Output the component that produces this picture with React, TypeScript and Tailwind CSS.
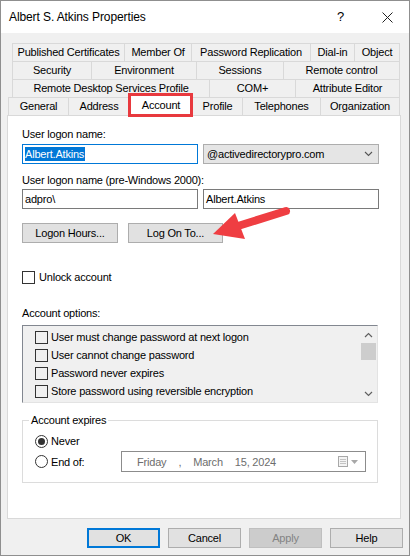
import React from "react";

type TabDef = { label: string; w: string };

const row1: TabDef[] = [
  { label: "Published Certificates", w: "w-[113px]" },
  { label: "Member Of", w: "w-[67px]" },
  { label: "Password Replication", w: "w-[119px]" },
  { label: "Dial-in", w: "w-[44px]" },
  { label: "Object", w: "w-[45px]" },
];

const row2: TabDef[] = [
  { label: "Security", w: "w-[80px]" },
  { label: "Environment", w: "w-[105px]" },
  { label: "Sessions", w: "w-[87px]" },
  { label: "Remote control", w: "w-[116px]" },
];

const row3: TabDef[] = [
  { label: "Remote Desktop Services Profile", w: "w-[198px]" },
  { label: "COM+", w: "w-[86px]" },
  { label: "Attribute Editor", w: "w-[104px]" },
];

const options = [
  "User must change password at next logon",
  "User cannot change password",
  "Password never expires",
  "Store password using reversible encryption",
];

function TabRow({ tabs, className }: { tabs: TabDef[]; className: string }) {
  return (
    <div className={`flex h-[18px] ${className}`}>
      {tabs.map((t, i) => (
        <div
          key={t.label}
          className={`${t.w} h-full flex items-center justify-center border-t border-r border-[#d9d9d9] ${
            i === 0 ? "border-l" : ""
          }`}
        >
          {t.label}
        </div>
      ))}
    </div>
  );
}

function Checkbox() {
  return <span className="w-[13px] h-[13px] border border-[#333333] shrink-0" />;
}

function Radio({ checked }: { checked?: boolean }) {
  return (
    <span className="w-[13px] h-[13px] rounded-full border border-[#333333] flex items-center justify-center shrink-0">
      {checked && <span className="w-[7px] h-[7px] rounded-full bg-[#333333]" />}
    </span>
  );
}

function Chevron({ up }: { up?: boolean }) {
  return (
    <svg width="9" height="6" viewBox="0 0 9 6">
      <polyline
        points={up ? "1,5 4.5,1.5 8,5" : "1,1 4.5,4.5 8,1"}
        fill="none"
        stroke="#606060"
        strokeWidth="1.2"
      />
    </svg>
  );
}

function Button({ label, className = "" }: { label: string; className?: string }) {
  return (
    <div
      className={`h-[20px] flex items-center justify-center border border-[#adadad] bg-[#e1e1e1] ${className}`}
    >
      {label}
    </div>
  );
}

export default function App() {
  return (
    <div className="relative w-[410px] h-[556px] border border-[#8f8f8f] bg-[#f0f0f0] flex flex-col text-black font-['Liberation_Sans',Arial,sans-serif] text-[11px] tracking-[-0.2px] overflow-hidden">
      {/* title bar */}
      <div className="h-[32px] bg-white flex items-center pl-[8px] shrink-0">
        <span className="text-[12px] tracking-[-0.1px]">Albert S. Atkins Properties</span>
        <span className="ml-auto text-[13px] mr-[38px]">?</span>
        <svg width="11" height="11" viewBox="0 0 11 11" className="mr-[16px]">
          <path d="M0.5 0.5 L10.5 10.5 M10.5 0.5 L0.5 10.5" stroke="#222" strokeWidth="1" />
        </svg>
      </div>

      {/* tabs */}
      <div className="mt-[10px] flex flex-col">
        <TabRow tabs={row1} className="ml-[11px]" />
        <TabRow tabs={row2} className="ml-[11px]" />
        <TabRow tabs={row3} className="ml-[11px]" />
        <div className="flex h-[18px] items-end ml-[7px]">
          <div className="w-[61px] h-full flex items-center justify-center border-t border-l border-r border-[#d9d9d9]">
            General
          </div>
          <div className="w-[61px] h-full flex items-center justify-center border-t border-r border-[#d9d9d9]">
            Address
          </div>
          <div className="relative z-10 w-[63px] h-[22px] -mb-px flex items-center justify-center bg-white border-t border-r border-[#d9d9d9]">
            Account
            <span className="absolute -left-[2px] -right-[1px] -top-[2px] -bottom-[1px] border-[3px] border-[#e8393e]" />
          </div>
          <div className="w-[50px] h-full flex items-center justify-center border-t border-r border-[#d9d9d9]">
            Profile
          </div>
          <div className="w-[78px] h-full flex items-center justify-center border-t border-r border-[#d9d9d9]">
            Telephones
          </div>
          <div className="w-[79px] h-full flex items-center justify-center border-t border-r border-[#d9d9d9]">
            Organization
          </div>
        </div>
      </div>

      {/* account page */}
      <div className="ml-[6px] w-[394px] h-[404px] bg-white border border-[#d9d9d9] flex flex-col pl-[14px] pt-[10px] leading-[16px]">
        <div>User logon name:</div>
        <div className="mt-[2px] flex gap-[5px]">
          <div className="w-[176px] h-[20px] border border-[#0078d7] flex items-center pl-[2px]">
            <span className="bg-[#0078d7] text-white leading-[14px] pr-[1px]">Albert.Atkins</span>
          </div>
          <div className="w-[176px] h-[20px] border border-[#adadad] bg-[#e5e5e5] flex items-center pl-[3px] pr-[5px]">
            <span>@activedirectorypro.com</span>
            <svg width="9" height="6" viewBox="0 0 9 6" className="ml-auto">
              <polyline points="1,1 4.5,4.5 8,1" fill="none" stroke="#555" strokeWidth="1.1" />
            </svg>
          </div>
        </div>

        <div className="mt-[8px]">User logon name (pre-Windows 2000):</div>
        <div className="mt-[1px] flex gap-[5px]">
          <div className="w-[176px] h-[20px] border border-[#7a7a7a] flex items-center pl-[2px]">adpro\</div>
          <div className="w-[176px] h-[20px] border border-[#7a7a7a] flex items-center pl-[2px]">Albert.Atkins</div>
        </div>

        <div className="mt-[14px] flex gap-[10px]">
          <Button label="Logon Hours..." className="w-[96px]" />
          <Button label="Log On To..." className="w-[95px]" />
        </div>

        <div className="mt-[26px] h-[16px] flex items-center gap-[4px]">
          <Checkbox />
          <span>Unlock account</span>
        </div>

        <div className="mt-[20px]">Account options:</div>
        <div className="mt-[4px] w-[356px] h-[78px] flex bg-[#f0f0f0] border-t border-l border-[#828790] border-r border-b border-r-[#e3e3e3] border-b-[#e3e3e3]">
          <div className="flex-1 flex flex-col pt-[2px] pl-[12px]">
            {options.map((o) => (
              <div key={o} className="h-[18px] flex items-center gap-[3px]">
                <Checkbox />
                <span>{o}</span>
              </div>
            ))}
          </div>
          <div className="w-[17px] flex flex-col items-center">
            <div className="h-[17px] flex items-center justify-center">
              <Chevron up />
            </div>
            <div className="w-[15px] h-[17px] bg-[#cdcdcd]" />
            <div className="flex-1" />
            <div className="h-[17px] flex items-center justify-center">
              <Chevron />
            </div>
          </div>
        </div>

        <fieldset className="mt-[9px] w-[356px] border border-[#dcdcdc] pl-[12px] pb-[10px]">
          <legend className="-ml-[6px] px-[2px] leading-[16px]">Account expires</legend>
          <div className="mt-[5px] h-[16px] flex items-center gap-[3px]">
            <Radio checked />
            <span>Never</span>
          </div>
          <div className="mt-[2px] flex items-center">
            <div className="w-[86px] flex items-center gap-[3px]">
              <Radio />
              <span>End of:</span>
            </div>
            <div className="w-[245px] h-[21px] border border-[#8c8c8c] flex items-center text-[#6d6d6d] pr-[7px]">
              <span className="ml-[15px]">Friday</span>
              <span className="ml-[12px]">,</span>
              <span className="ml-[12px]">March</span>
              <span className="ml-[12px]">15, 2024</span>
              <svg width="10" height="11" viewBox="0 0 10 11" className="ml-auto">
                <rect x="0.5" y="0.5" width="9" height="10" fill="#f4f4f4" stroke="#a8a8a8" />
                <path d="M2 3.5 H8 M2 5.5 H8 M2 7.5 H8" stroke="#c4c4c4" strokeWidth="1" />
              </svg>
              <svg width="7" height="4" viewBox="0 0 7 4" className="ml-[3px]">
                <polygon points="0,0 7,0 3.5,4" fill="#a8a8a8" />
              </svg>
            </div>
          </div>
        </fieldset>
      </div>

      {/* dialog buttons */}
      <div className="mt-[9px] flex justify-end gap-[8px] pr-[6px]">
        <div className="w-[73px] h-[20px] flex items-center justify-center border-2 border-[#0078d7] bg-[#e1e1e1]">
          OK
        </div>
        <Button label="Cancel" className="w-[73px]" />
        <div className="w-[73px] h-[20px] flex items-center justify-center border border-[#bfbfbf] bg-[#cccccc] text-[#838383]">
          Apply
        </div>
        <Button label="Help" className="w-[73px]" />
      </div>

      {/* callout arrow pointing at Log On To */}
      <svg
        className="absolute -left-px -top-px pointer-events-none"
        width="410"
        height="556"
        viewBox="0 0 410 556"
      >
        <line x1="238" y1="226" x2="286" y2="211" stroke="#ef3e42" strokeWidth="8" strokeLinecap="round" />
        <polygon points="213,234 235,213 245,239" fill="#ef3e42" />
      </svg>
    </div>
  );
}
